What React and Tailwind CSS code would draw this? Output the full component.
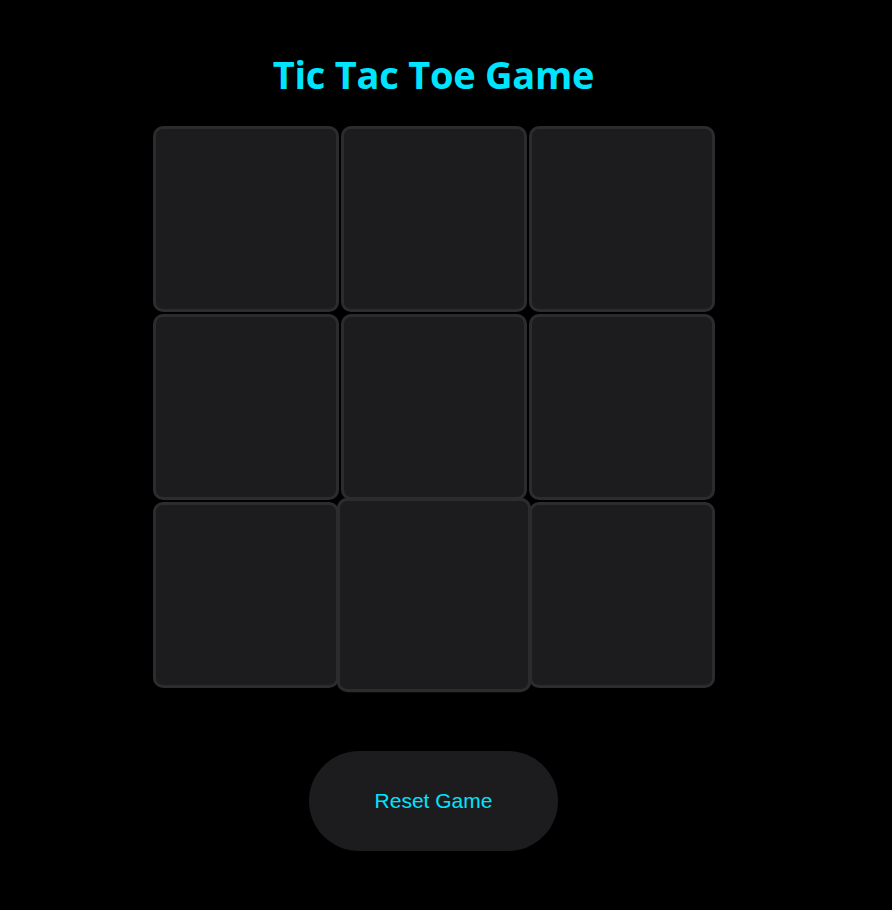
import React, { useState } from 'react';

export default function App() {
  const [board, setBoard] = useState(Array(9).fill(null));
  const [xNext, setXNext] = useState(true);

  const play = (i) => {
    if (board[i]) return;
    const next = board.slice();
    next[i] = xNext ? 'X' : 'O';
    setBoard(next);
    setXNext(!xNext);
  };

  const reset = () => {
    setBoard(Array(9).fill(null));
    setXNext(true);
  };

  return (
    <div className="min-h-[910px] w-full bg-black">
      <div className="w-[867px] flex flex-col items-center pt-[51px]">
        {/* Title */}
        <h1 className="text-[38px] leading-[46px] font-bold text-[#00e5ff] font-['Open_Sans',sans-serif] tracking-[-0.25px]">
          Tic Tac Toe Game
        </h1>

        {/* Board */}
        <div className="grid grid-cols-[repeat(3,186px)] gap-[2px] mt-[29px]">
          {board.map((cell, i) => (
            <button
              key={i}
              onClick={() => play(i)}
              className={`w-[186px] h-[186px] rounded-[10px] border-[3px] border-[#2c2c2f] bg-[#1c1c1e] text-[#00e5ff] text-6xl font-bold font-['Open_Sans',sans-serif] flex items-center justify-center ${i === 7 ? 'scale-[1.045]' : ''}`}
            >
              {cell}
            </button>
          ))}
        </div>

        {/* Reset */}
        <button
          onClick={reset}
          className="mt-[63px] w-[249px] h-[100px] rounded-full bg-[#1c1c1e] text-[#00e5ff] text-[21px] font-['Liberation_Sans',Arial,sans-serif]"
        >
          Reset Game
        </button>
      </div>
    </div>
  );
}
